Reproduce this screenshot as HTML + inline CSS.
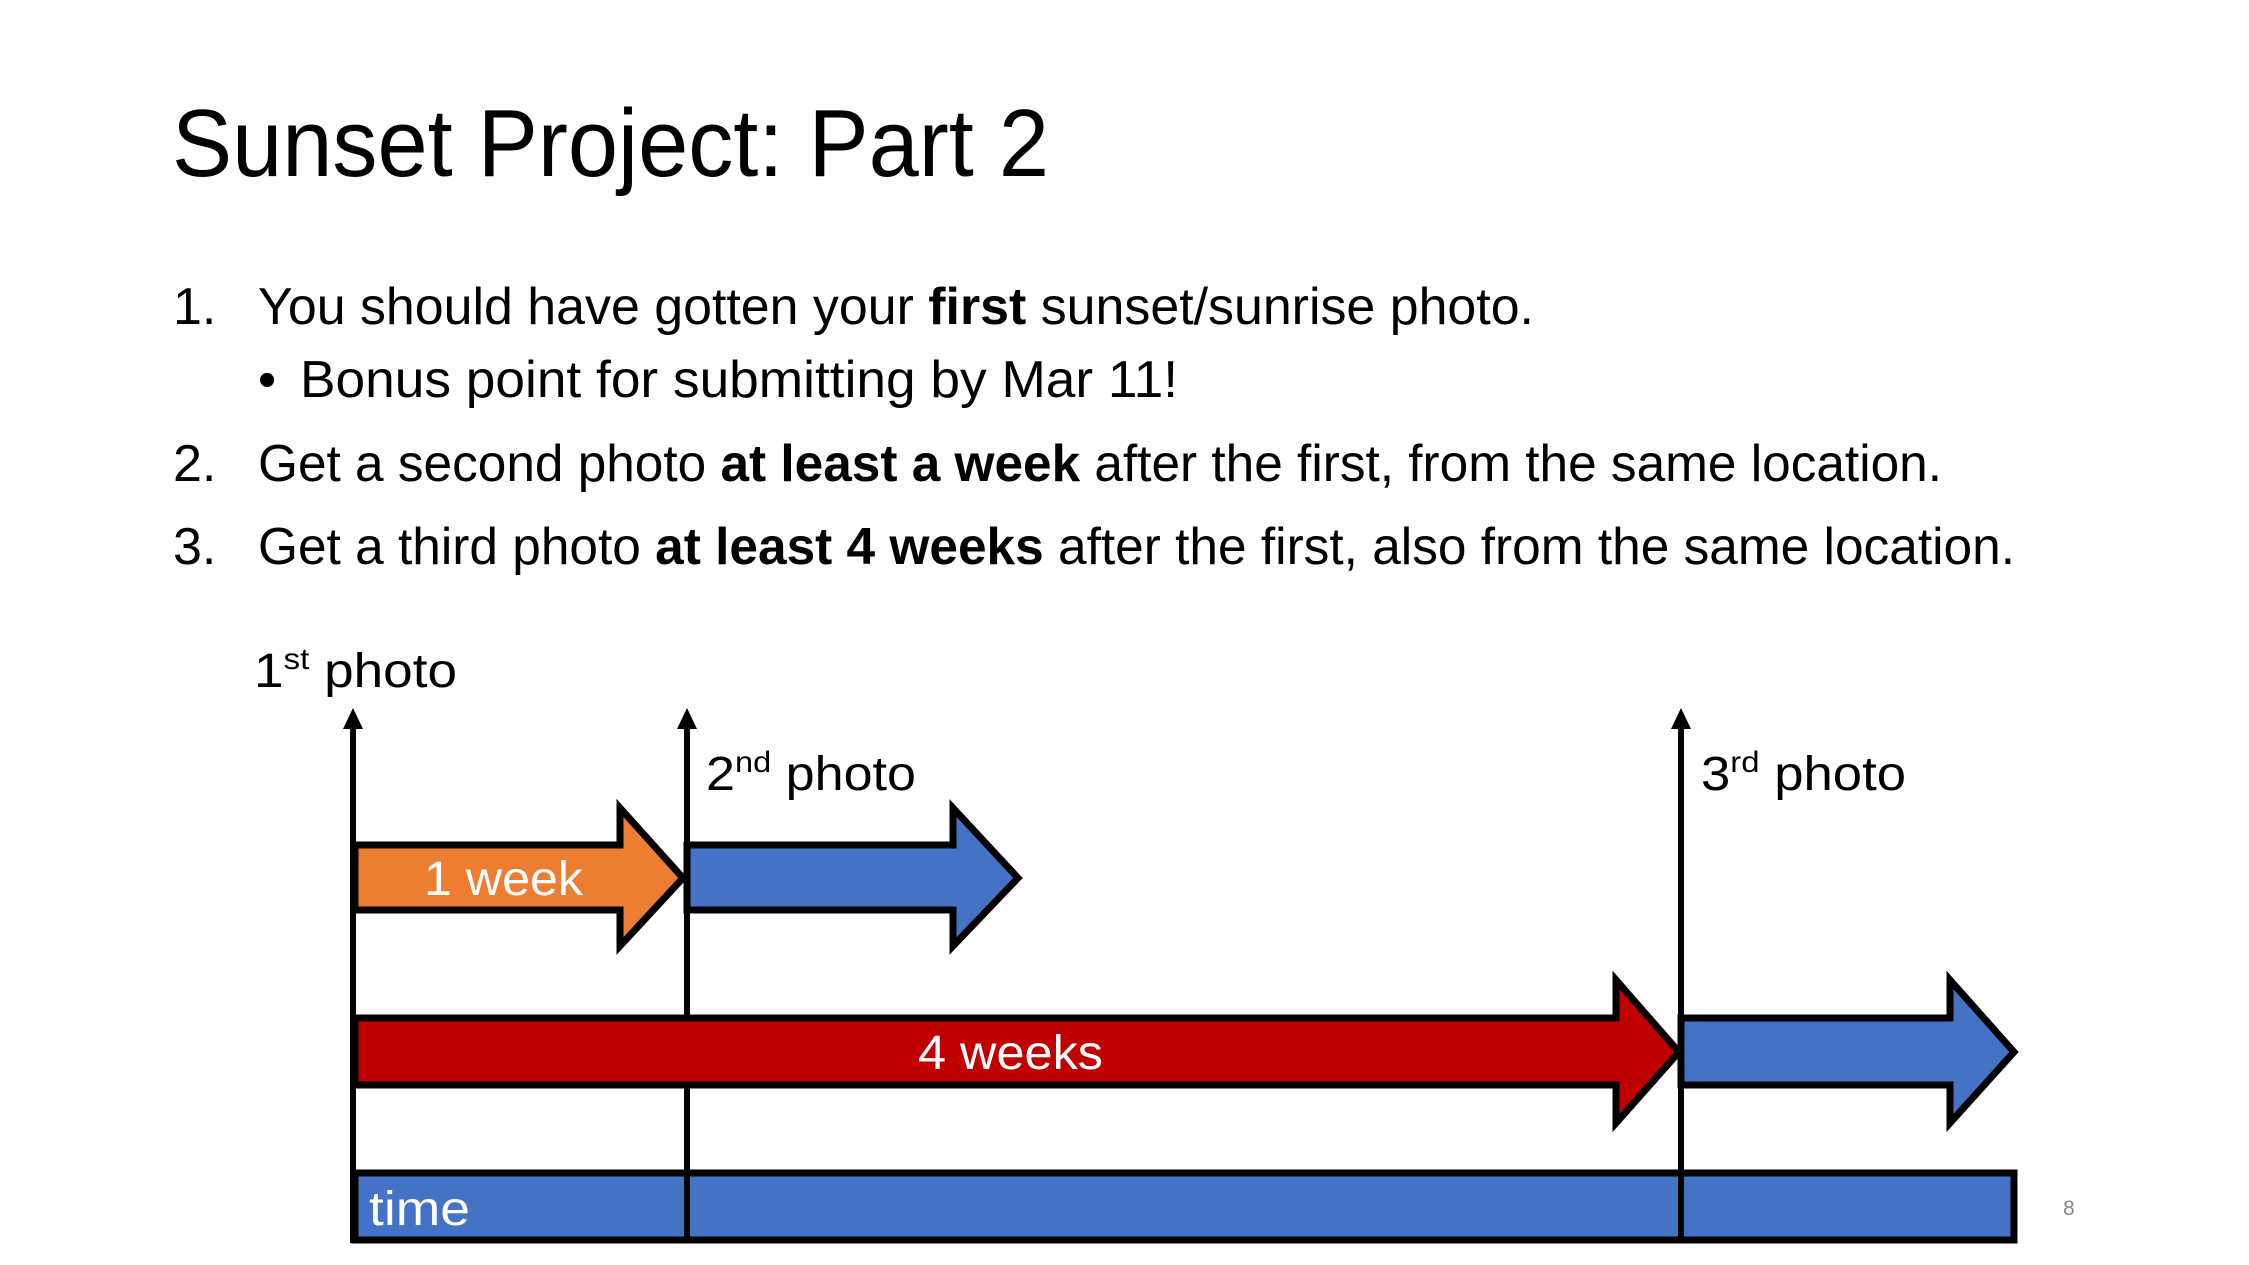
<!DOCTYPE html>
<html><head><meta charset="utf-8"><style>
html,body{margin:0;padding:0;background:#fff;}
svg{display:block;}
text{font-family:"Liberation Sans",sans-serif;}
</style></head><body>
<svg width="2249" height="1265" viewBox="0 0 2249 1265" xmlns="http://www.w3.org/2000/svg">
<rect width="2249" height="1265" fill="#fff"/>
<text x="172" y="176" font-size="96" textLength="877" lengthAdjust="spacingAndGlyphs" fill="#000">Sunset Project: Part 2</text>

<g font-size="52" fill="#000">
<text x="173" y="324">1.</text>
<text x="258" y="324" textLength="1276" lengthAdjust="spacingAndGlyphs">You should have gotten your <tspan font-weight="bold">first</tspan> sunset/sunrise photo.</text>
<text x="258" y="397">•</text>
<text x="300" y="397" textLength="878" lengthAdjust="spacingAndGlyphs">Bonus point for submitting by Mar 11!</text>
<text x="173" y="481">2.</text>
<text x="258" y="481" textLength="1684" lengthAdjust="spacingAndGlyphs">Get a second photo <tspan font-weight="bold">at least a week</tspan> after the first, from the same location.</text>
<text x="173" y="564">3.</text>
<text x="258" y="564" textLength="1757" lengthAdjust="spacingAndGlyphs">Get a third photo <tspan font-weight="bold">at least 4 weeks</tspan> after the first, also from the same location.</text>
</g>

<g font-size="48" fill="#000">
<text x="254" y="687" textLength="203" lengthAdjust="spacingAndGlyphs">1<tspan font-size="30" dy="-18">st</tspan><tspan dy="18"> photo</tspan></text>
<text x="706" y="790" textLength="210" lengthAdjust="spacingAndGlyphs">2<tspan font-size="30" dy="-18">nd</tspan><tspan dy="18"> photo</tspan></text>
<text x="1701" y="790" textLength="205" lengthAdjust="spacingAndGlyphs">3<tspan font-size="30" dy="-18">rd</tspan><tspan dy="18"> photo</tspan></text>
</g>

<rect x="355" y="1173" width="1659" height="67" fill="#4472C4" stroke="#000" stroke-width="7"/>

<path d="M355 845 H620 V808 L683 878 L620 946 V910 H355 Z" fill="#ED7D31" stroke="#000" stroke-width="7"/>
<path d="M687 845 H953 V808 L1018 878 L953 946 V910 H687 Z" fill="#4472C4" stroke="#000" stroke-width="7"/>
<path d="M355 1018 H1616 V980 L1679 1052 L1616 1123 V1085 H355 Z" fill="#C00000" stroke="#000" stroke-width="7"/>
<path d="M1681 1018 H1950 V980 L2014 1052 L1950 1123 V1085 H1681 Z" fill="#4472C4" stroke="#000" stroke-width="7"/>

<g stroke="#000" stroke-width="6">
<line x1="353" y1="722" x2="353" y2="1243"/>
<line x1="687" y1="722" x2="687" y2="1015"/>
<line x1="687" y1="1088" x2="687" y2="1243"/>
<line x1="1681" y1="722" x2="1681" y2="1243"/>
</g>
<g fill="#000">
<path d="M353 708 L363 729 L343 729 Z"/>
<path d="M687 708 L697 729 L677 729 Z"/>
<path d="M1681 708 L1691 729 L1671 729 Z"/>
</g>

<g font-size="48" fill="#fff">
<text x="424" y="895" textLength="159" lengthAdjust="spacingAndGlyphs">1 week</text>
<text x="918" y="1069" textLength="185" lengthAdjust="spacingAndGlyphs">4 weeks</text>
<text x="369" y="1225" textLength="101" lengthAdjust="spacingAndGlyphs">time</text>
</g>

<text x="2063" y="1215" font-size="21" fill="#898989">8</text>
</svg>
</body></html>
